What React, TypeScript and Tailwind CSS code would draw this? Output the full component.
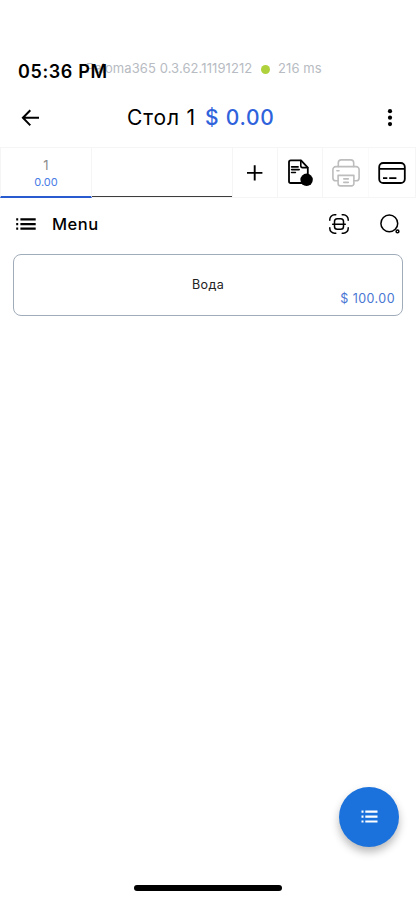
import type { ReactNode } from 'react';

type ActionCellProps = {
  children: ReactNode;
  className: string;
};

function BackIcon() {
  return (
    <svg fill="none" height="20" stroke="currentColor" strokeLinecap="square" strokeWidth="2" viewBox="0 0 20 20" width="20">
      <path d="M9.6 3 2.9 9.8l6.7 6.8M3.3 9.8H18" />
    </svg>
  );
}

function MoreIcon() {
  return (
    <svg fill="currentColor" height="20" viewBox="0 0 6 20" width="6">
      <circle cx="3" cy="3.2" r="2.1" />
      <circle cx="3" cy="9.7" r="2.1" />
      <circle cx="3" cy="16.1" r="2.1" />
    </svg>
  );
}

function PlusIcon() {
  return (
    <svg fill="none" height="16" stroke="currentColor" strokeWidth="1.9" viewBox="0 0 16 16" width="16">
      <path d="M7.7.2v15.4M0 7.9h15.4" />
    </svg>
  );
}

function BillIcon() {
  return (
    <svg fill="none" height="28" stroke="currentColor" strokeLinecap="round" strokeLinejoin="round" strokeWidth="1.8" viewBox="0 0 28 28" width="28">
      <path d="M15.500 24H4.800A1.800 1.800 0 0 1 3 22.200V3.100a1.800 1.800 0 0 1 1.800-1.800H15l6.800 7.300V18" />
      <path d="M14.800 1.600v5.200a1.800 1.800 0 0 0 1.800 1.800h5" strokeWidth="1.6" />
      <path d="M5.600 7.900h6.500M5.600 10.600h7.600M5.600 13.500h3.800" strokeWidth="1.6" />
      <circle cx="20.600" cy="20.800" fill="currentColor" r="6.200" stroke="none" />
    </svg>
  );
}

function PrinterIcon() {
  return (
    <svg fill="none" height="28" stroke="currentColor" strokeLinecap="round" strokeLinejoin="round" strokeWidth="1.6" viewBox="0 0 28 28" width="28">
      <path d="M6.3 7.6V3.7A2.9 2.9 0 0 1 9.2.9h9.6a2.9 2.9 0 0 1 2.9 2.8v3.9" />
      <path d="M6.1 21.8H3.8A2.9 2.9 0 0 1 .9 18.9v-8.400a2.900 2.900 0 0 1 2.900-2.900h20.400a2.900 2.900 0 0 1 2.900 2.900v8.400a2.900 2.900 0 0 1-2.900 2.900h-2.300" />
      <path d="M6.1 16.4h15.8v8.1a2.4 2.4 0 0 1-2.4 2.4h-11a2.4 2.4 0 0 1-2.4-2.4zM4.9 11.7H7M11.8 19.9h4.5M11.8 23.4h4.5" />
    </svg>
  );
}

function CardIcon() {
  return (
    <svg fill="none" height="22" stroke="currentColor" strokeWidth="1.8" viewBox="0 0 28 22" width="28">
      <rect height="20" rx="4" width="25.6" x="1.2" y="1" />
      <path d="M1.2 6.9h25.6M5 16.1h4.3M11.2 16.1h7.2" strokeWidth="1.6" />
    </svg>
  );
}

function ListIcon() {
  return (
    <svg fill="currentColor" height="12" viewBox="0 0 20 12" width="20">
      <path d="M.2.3h2v2.200h-2zM4.400.3h15.300v2.200H4.400zM.2 5h2v2.200h-2zM4.400 5h15.300v2.200H4.400zM.2 9.600h2v2.200h-2zM4.400 9.600h15.300v2.200H4.400z" />
    </svg>
  );
}

function ScanIcon() {
  return (
    <svg fill="none" height="20" stroke="currentColor" strokeLinecap="round" strokeWidth="1.5" viewBox="0 0 20 20" width="20">
      <path d="M.8 6.2v-.7A4.7 4.7 0 0 1 5.5.8h1.300M13.200.8h1.300a4.700 4.700 0 0 1 4.700 4.700v.7M19.200 13.800v.7a4.700 4.700 0 0 1-4.700 4.700h-1.300M6.800 19.200H5.500A4.700 4.700 0 0 1 .8 14.500v-.7" />
      <rect height="10.4" rx="2.8" width="9" x="5.5" y="4.8" />
      <path d="M3.7 10.200h12.600" />
    </svg>
  );
}

function SearchIcon() {
  return (
    <svg fill="none" height="20" stroke="currentColor" strokeWidth="1.5" viewBox="0 0 20 20" width="20">
      <circle cx="9.3" cy="9.4" r="8.400" />
      <circle cx="17.5" cy="17.4" r="1.400" />
    </svg>
  );
}

function ActionCell({ children, className }: ActionCellProps) {
  return (
    <button className={`flex h-full items-center justify-center ${className}`} type="button">
      {children}
    </button>
  );
}

function StatusBar() {
  return (
    <div className="relative h-[92px]">
      <div className="absolute top-[60px] left-[86px] flex h-[18px] items-center whitespace-nowrap text-[13px] text-[#b7bbc2]">
        <span className="w-[175px] tracking-[0.08px]">Paloma365 0.3.62.11191212</span>
        <span className="mr-[8px] size-[9px] rounded-full bg-[#afd13c]" />
        <span className="tracking-[0.1px]">216 ms</span>
      </div>
      <div className="absolute top-[60px] left-[18px] whitespace-nowrap text-[18px] leading-6 font-semibold tracking-[0.62px]">
        05:36 PM
      </div>
    </div>
  );
}

export default function App() {
  return (
    <div className="relative flex h-[900px] w-[416px] flex-col overflow-hidden bg-white font-['Inter',sans-serif] text-black">
      <StatusBar />

      <header className="flex h-[55px] items-center pr-[23px] pb-1 pl-5">
        <BackIcon />
        <h1 className="ml-[87px] flex gap-[9px] whitespace-nowrap text-[21px] tracking-[0.85px]">
          <span>Стол 1</span>
          <span className="font-medium tracking-[0.75px] text-[#2f63dc]">$ 0.00</span>
        </h1>
        <div className="ml-auto">
          <MoreIcon />
        </div>
      </header>

      <div className="flex h-[51px] border border-[#f5f5f5]">
        <div className="-ml-px flex h-[50px] w-[92px] flex-col items-center border-x border-b-2 border-x-[#f5f5f5] border-b-[#285bd0] pt-[9px]">
          <span className="text-[13px] leading-4 text-[#8b8b8b]">1</span>
          <span className="mt-px text-[11px] leading-4 text-[#477be6]">0.00</span>
        </div>
        <div className="flex h-[50px] w-[140px] items-end">
          <div className="mb-px h-px w-full bg-[#3f3c3c]" />
        </div>
        <ActionCell className="w-[46px] border-x border-[#f5f5f5]">
          <PlusIcon />
        </ActionCell>
        <ActionCell className="w-[45px] border-r border-[#f5f5f5]">
          <BillIcon />
        </ActionCell>
        <ActionCell className="w-[46px] border-r border-[#fafafa] text-[#bdbdbd]">
          <PrinterIcon />
        </ActionCell>
        <ActionCell className="w-[46px]">
          <CardIcon />
        </ActionCell>
      </div>

      <div className="flex h-[56px] items-center pr-[16px] pb-1 pl-4">
        <ListIcon />
        <span className="ml-4 text-[16.5px] font-medium tracking-[0.55px]">Menu</span>
        <div className="ml-auto flex gap-[31px]">
          <ScanIcon />
          <SearchIcon />
        </div>
      </div>

      <div className="mx-[13px] flex h-[62px] flex-col rounded-[8px] border border-[#a1acba] pt-[21px]">
        <span className="text-center text-[12.5px] leading-[18px] tracking-[0.4px] text-[#222]">Вода</span>
        <span className="mt-[-4px] pr-[7px] text-right text-[12.5px] leading-[18px] tracking-[0.45px] text-[#4876d3]">
          $ 100.00
        </span>
      </div>

      <button
        className="absolute top-[786.5px] left-[339px] flex size-[60px] items-center justify-center rounded-full bg-[#1b72dc] text-white shadow-[0_5px_8px_rgba(0,0,0,0.28)]"
        type="button"
      >
        <svg fill="currentColor" height="14" viewBox="0 0 16 14" width="17">
          <path d="M0 .6h2v2.200H0zM3.800.6H16v2.200H3.800zM0 5.500h2v2.200H0zM3.800 5.500H16v2.200H3.800zM0 10.400h2v2.200H0zM3.800 10.400H16v2.200H3.800z" />
        </svg>
      </button>

      <div className="absolute bottom-[9px] left-[134px] h-[6px] w-[148px] rounded-full bg-black" />
    </div>
  );
}
